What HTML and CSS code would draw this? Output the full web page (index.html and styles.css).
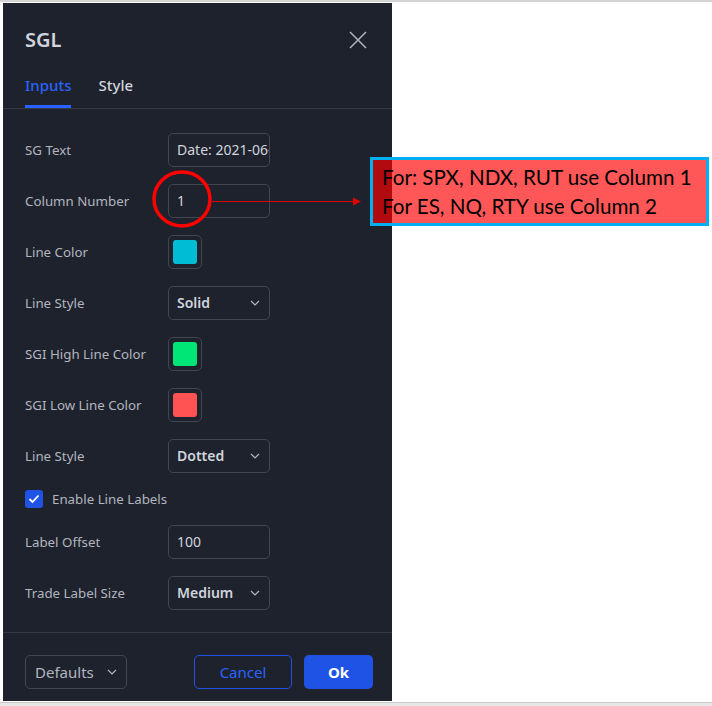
FILE: index.html
```html
<!DOCTYPE html>
<html lang="en">
<head>
    <meta charset="UTF-8">
    <meta name="viewport" content="width=device-width, initial-scale=1.0">
    <title>SGL Settings</title>
    <link rel="stylesheet" href="styles.css">
</head>
<body>
    <div class="topbar"></div>
    <div class="stage">
        <div class="dialog">
            <div class="header">
                <span class="title">SGL</span>
                <svg class="close" width="18" height="18" viewBox="0 0 18 18">
                    <path d="M1 1 L17 17 M17 1 L1 17" stroke="#b2b5be" stroke-width="1.5" fill="none"/>
                </svg>
            </div>
            <div class="tabs">
                <div class="tab active">Inputs</div>
                <div class="tab">Style</div>
            </div>

            <div class="content">
                <div class="row">
                    <span class="label">SG Text</span>
                    <div class="field">Date: 2021-06-04</div>
                </div>
                <div class="row">
                    <span class="label">Column Number</span>
                    <div class="field">1</div>
                </div>
                <div class="row">
                    <span class="label">Line Color</span>
                    <div class="swatch"><span class="chip cyan"></span></div>
                </div>
                <div class="row">
                    <span class="label">Line Style</span>
                    <div class="field select">Solid
                        <svg class="chev" width="10" height="6" viewBox="0 0 10 6"><path d="M1 1 L5 5 L9 1" stroke="#b2b5be" stroke-width="1.2" fill="none"/></svg>
                    </div>
                </div>
                <div class="row">
                    <span class="label">SGI High Line Color</span>
                    <div class="swatch"><span class="chip green"></span></div>
                </div>
                <div class="row">
                    <span class="label">SGI Low Line Color</span>
                    <div class="swatch"><span class="chip red"></span></div>
                </div>
                <div class="row">
                    <span class="label">Line Style</span>
                    <div class="field select">Dotted
                        <svg class="chev" width="10" height="6" viewBox="0 0 10 6"><path d="M1 1 L5 5 L9 1" stroke="#b2b5be" stroke-width="1.2" fill="none"/></svg>
                    </div>
                </div>
                <div class="check-row">
                    <span class="checkbox">
                        <svg width="12" height="10" viewBox="0 0 12 10"><path d="M1.5 5 L4.5 8 L10.5 1.5" stroke="#fff" stroke-width="1.8" fill="none"/></svg>
                    </span>
                    <span class="label">Enable Line Labels</span>
                </div>
                <div class="row">
                    <span class="label">Label Offset</span>
                    <div class="field">100</div>
                </div>
                <div class="row">
                    <span class="label">Trade Label Size</span>
                    <div class="field select">Medium
                        <svg class="chev" width="10" height="6" viewBox="0 0 10 6"><path d="M1 1 L5 5 L9 1" stroke="#b2b5be" stroke-width="1.2" fill="none"/></svg>
                    </div>
                </div>
            </div>

            <div class="footer">
                <div class="defaults">Defaults
                    <svg class="chev" width="10" height="6" viewBox="0 0 10 6"><path d="M1 1 L5 5 L9 1" stroke="#b2b5be" stroke-width="1.2" fill="none"/></svg>
                </div>
                <div class="actions">
                    <button class="btn cancel">Cancel</button>
                    <button class="btn ok">Ok</button>
                </div>
            </div>
        </div>
    </div>
    <div class="bottombar"></div>

    <!-- annotation drawn over the screenshot -->
    <svg class="marks" width="712" height="706" viewBox="0 0 712 706">
        <ellipse cx="182" cy="199" rx="28" ry="27" stroke="#ff0000" stroke-width="3.5" fill="none"/>
        <line x1="212" y1="201.5" x2="355" y2="201.5" stroke="#e00000" stroke-width="1"/>
        <path d="M353 197.5 L361 201.5 L353 205.5 Z" fill="#e00000"/>
    </svg>
    <div class="note">
        <div>For: SPX, NDX, RUT use Column 1</div>
        <div>For ES, NQ, RTY use Column 2</div>
    </div>
</body>
</html>
```

FILE: styles.css
```css
body {
    margin: 0;
    background: #fff;
    font-family: "Noto Sans", "Open Sans", sans-serif;
    width: 712px;
    height: 706px;
    overflow: hidden;
    position: relative;
}
.topbar {
    height: 2px;
    background: #d4d4d4;
    border-bottom: 1px solid #fff;
}
.stage {
    display: flex;
    padding-left: 3px;
}
.dialog {
    width: 389px;
    height: 698px;
    background: #1e222d;
    color: #d1d4dc;
    display: flex;
    flex-direction: column;
    box-sizing: border-box;
}
.header {
    display: flex;
    justify-content: space-between;
    align-items: center;
    padding: 24px 25px 0 22px;
    height: 26px;
}
.title {
    font-size: 20px;
    font-weight: 600;
    line-height: 26px;
    color: #d1d4dc;
}
.close {
    display: block;
}
.tabs {
    display: flex;
    gap: 27px;
    padding: 0 22px;
    margin-top: 13px;
    border-bottom: 1px solid #363a45;
}
.tab {
    font-size: 15px;
    font-weight: 500;
    line-height: 20px;
    padding: 9px 0 10px;
    border-bottom: 3px solid transparent;
    color: #d1d4dc;
}
.tab.active {
    color: #2962ff;
    border-bottom-color: #2962ff;
}
.content {
    display: flex;
    flex-direction: column;
    gap: 17px;
    padding: 24px 22px 21px;
    flex: 1;
}
.row {
    display: flex;
    align-items: center;
    height: 34px;
}
.label {
    font-size: 13.3px;
    color: #b2b5be;
    width: 143px;
    white-space: nowrap;
}
.field {
    width: 102px;
    height: 34px;
    box-sizing: border-box;
    border: 1px solid #434651;
    border-radius: 5px;
    padding: 0 8px;
    font-size: 14px;
    line-height: 32px;
    color: #d1d4dc;
    white-space: nowrap;
    overflow: hidden;
}
.select {
    display: flex;
    justify-content: space-between;
    align-items: center;
    font-weight: 600;
    padding-right: 9px;
}
.chev {
    display: block;
}
.swatch {
    width: 34px;
    height: 34px;
    box-sizing: border-box;
    border: 1px solid #434651;
    border-radius: 5px;
    display: flex;
    align-items: center;
    justify-content: center;
}
.chip {
    width: 24px;
    height: 24px;
    border-radius: 3px;
}
.cyan { background: #00bcd4; }
.green { background: #00e676; }
.red { background: #ff5252; }
.check-row {
    display: flex;
    align-items: center;
    height: 18px;
    gap: 9px;
}
.checkbox {
    width: 18px;
    height: 18px;
    border-radius: 3px;
    background: #1e53e5;
    display: flex;
    align-items: center;
    justify-content: center;
}
.check-row .label {
    width: auto;
}
.footer {
    display: flex;
    justify-content: space-between;
    align-items: center;
    border-top: 1px solid #363a45;
    padding: 22px 19px 12px 22px;
}
.defaults {
    width: 102px;
    height: 34px;
    box-sizing: border-box;
    border: 1px solid #434651;
    border-radius: 5px;
    display: flex;
    align-items: center;
    justify-content: space-between;
    padding: 0 9px;
    font-size: 15px;
    color: #b2b5be;
}
.actions {
    display: flex;
    gap: 12px;
}
.btn {
    height: 34px;
    border-radius: 5px;
    font-family: inherit;
    font-size: 15px;
    cursor: pointer;
    box-sizing: border-box;
}
.cancel {
    width: 98px;
    background: transparent;
    border: 1px solid #1e53e5;
    color: #2962ff;
}
.ok {
    width: 69px;
    background: #1e53e5;
    border: none;
    color: #fff;
    font-weight: 700;
}
.bottombar {
    height: 4px;
    margin-top: 1px;
    background: #e6e6e6;
    border-top: 1px solid #c8c8c8;
}
.marks {
    position: absolute;
    left: 0;
    top: 0;
    pointer-events: none;
}
.note {
    position: absolute;
    left: 370px;
    top: 157px;
    width: 339px;
    height: 69px;
    box-sizing: border-box;
    border: 3px solid #00b0f0;
    background: rgba(255, 0, 0, 0.66);
    padding: 3px 0 0 9px;
    font-family: Lato, "Open Sans", sans-serif;
    font-size: 20.6px;
    line-height: 29px;
    color: #000;
    white-space: nowrap;
}
```
